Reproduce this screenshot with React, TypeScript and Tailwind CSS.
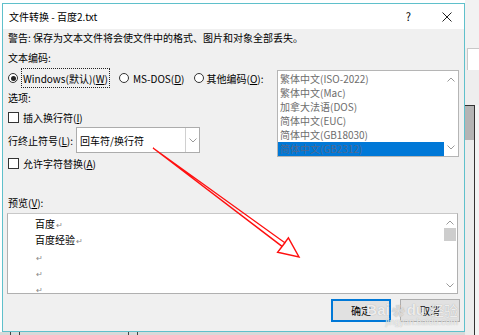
import React from 'react';

const font = "font-['Noto_Sans_CJK_SC','Noto_Sans',sans-serif]";

function U({ children }: { children: React.ReactNode }) {
  return <span className="underline underline-offset-1">{children}</span>;
}

function Radio({ checked }: { checked?: boolean }) {
  return (
    <span className="w-[10px] h-[10px] rounded-full border border-[#333] bg-white flex items-center justify-center shrink-0">
      {checked && <span className="w-[5px] h-[5px] rounded-full bg-[#222]" />}
    </span>
  );
}

function Check() {
  return <span className="w-[11px] h-[11px] border border-[#333] bg-white shrink-0" />;
}

function Chevron({ up }: { up?: boolean }) {
  return (
    <svg width="8" height="5" viewBox="0 0 8 5" className="text-[#9a9a9a]">
      <path d={up ? 'M0.5 4.5 L4 1 L7.5 4.5' : 'M0.5 0.5 L4 4 L7.5 0.5'} fill="none" stroke="currentColor" strokeWidth="1" />
    </svg>
  );
}

const encodings = ['繁体中文(ISO-2022)', '繁体中文(Mac)', '加拿大法语(DOS)', '简体中文(EUC)', '简体中文(GB18030)', '简体中文(GB2312)'];

const preview = ['百度', '百度经验', '', '', ''];

export default function App() {
  return (
    <div className={`w-[479px] h-[335px] overflow-hidden flex bg-white text-[10px] text-black ${font}`}>
      <div className="w-[465px] flex flex-col shrink-0">
        <div className="h-[3px] bg-white" />
        <div className="ml-[2px] w-[463px] h-[329px] border border-[#5fc0cb] flex flex-col relative">
          <div className="h-[25px] bg-white flex items-center pl-[6px] pr-[12px]">
            <span>文件转换 - 百度2.txt</span>
            <span className="ml-auto mr-[31px] text-[11px]">?</span>
            <svg width="10" height="10" viewBox="0 0 10 10">
              <path d="M0.5 0.5 L9.5 9.5 M9.5 0.5 L0.5 9.5" stroke="#222" strokeWidth="1" />
            </svg>
          </div>

          <div className="flex-1 bg-[#f0f0f0] pl-[5px] pr-[4px] pt-[1px] flex flex-col">
            <div className="h-[16px] leading-[16px]">警告: 保存为文本文件将会使文件中的格式、图片和对象全部丢失。</div>

            <div className="flex">
              <div className="w-[269px] flex flex-col">
                <div className="h-[16px] leading-[16px] mt-[4px]">文本编码:</div>
                <div className="h-[20px] mt-[2px] flex items-center">
                  <Radio checked />
                  <span className="ml-[3px] h-[20px] px-[1px] border border-dotted border-[#222] flex items-center">
                    Windows(默认)(<U>W</U>)
                  </span>
                  <span className="ml-[9px]">
                    <Radio />
                  </span>
                  <span className="ml-[4px]">
                    MS-DOS(<U>D</U>)
                  </span>
                  <span className="ml-[9px]">
                    <Radio />
                  </span>
                  <span className="ml-[3px]">
                    其他编码(<U>O</U>):
                  </span>
                </div>
                <div className="h-[16px] leading-[16px] mt-[2px]">选项:</div>
                <div className="h-[16px] mt-[3px] flex items-center gap-[4px]">
                  <Check />
                  <span>
                    插入换行符(<U>I</U>)
                  </span>
                </div>
                <div className="h-[26px] mt-[2px] flex items-center">
                  <span>
                    行终止符号(<U>L</U>):
                  </span>
                  <div className="ml-[3px] w-[124px] h-[26px] bg-white border border-[#acacac] flex items-center">
                    <span className="pl-[3px] flex-1">回车符/换行符</span>
                    <div className="w-[14px] h-full border-l border-[#d0d0d0] flex items-center justify-center">
                      <Chevron />
                    </div>
                  </div>
                </div>
                <div className="h-[16px] mt-[2px] flex items-center gap-[4px]">
                  <Check />
                  <span>
                    允许字符替换(<U>A</U>)
                  </span>
                </div>
              </div>

              <div className="mt-[24px] w-[182px] h-[87px] border border-[#b5b5b5] bg-white flex">
                <div className="flex-1 pt-[1px] flex flex-col">
                  {encodings.map((e, i) => (
                    <div
                      key={e}
                      className={`h-[14px] leading-[14px] pl-[2px] ${
                        i === encodings.length - 1 ? 'bg-[#0078d7] text-[#4d6a93]' : 'text-[#6d6d6d]'
                      }`}
                    >
                      {e}
                    </div>
                  ))}
                </div>
                <div className="w-[14px] flex flex-col items-center justify-between py-[6px]">
                  <Chevron up />
                  <Chevron />
                </div>
              </div>
            </div>

            <div className="h-[16px] leading-[16px] mt-[24px]">
              预览(<U>V</U>):
            </div>
            <div className="mt-[2px] -ml-px w-[451px] h-[81px] bg-white border border-[#b0b0b0] border-t-[#c8c8c8] flex overflow-hidden">
              <div className="flex-1 pl-[27px] pt-[2px] flex flex-col">
                {preview.map((line, i) => (
                  <div key={i} className="h-[16.3px] leading-[16px] shrink-0 flex items-center">
                    <span>{line}</span>
                    <span className="text-[8px] text-[#888] ml-[1px] mt-[2px]">↵</span>
                  </div>
                ))}
              </div>
              <div className="w-[14px] flex flex-col items-center pt-[6px] pb-[5px]">
                <Chevron up />
                <div className="mt-[3px] w-[12px] h-[13px] bg-[#cdcdcd]" />
                <div className="mt-auto">
                  <Chevron />
                </div>
              </div>
            </div>

            <div className="mt-[5px] flex justify-end gap-[9px]">
              <button className="w-[60px] h-[23px] bg-[#e1e1e1] border-2 border-[#0078d7] flex items-center justify-center">
                确定
              </button>
              <button className="w-[60px] h-[23px] bg-[#e1e1e1] border border-[#adadad] flex items-center justify-center">
                取消
              </button>
            </div>
          </div>

          <div className="absolute right-[6px] bottom-[3px] flex flex-col items-end text-white/80 [text-shadow:0_0_1px_#999] pointer-events-none">
            <div className="flex items-end gap-[2px] leading-none">
              <span className="text-[15px] font-bold font-['Liberation_Sans',sans-serif]">Bai</span>
              <span className="text-[13px] text-white/60">✿</span>
              <span className="text-[15px] font-bold font-['Liberation_Sans',sans-serif]">du</span>
              <span className="text-[14px] ml-[3px]">经验</span>
            </div>
            <div className="text-[9px] leading-[11px] font-['Liberation_Sans',sans-serif]">jingyan.baidu.com</div>
          </div>

          <svg className="absolute left-[-3px] top-[-4px] pointer-events-none" width="465" height="335" viewBox="0 0 465 335">
            <polygon
              points="153,148 284.9,242.8 277.6,252.2 299,257 288.4,237.8 282.1,246.4"
              fill="none"
              stroke="#ff1010"
              strokeWidth="1.4"
              strokeLinejoin="miter"
            />
          </svg>
        </div>
        <div className="flex-1 bg-[#d9d9d9] flex">
          <span className="ml-[10px] w-px bg-[#444]" />
          <span className="ml-[8px] w-px bg-[#444]" />
          <span className="ml-[108px] w-px bg-[#444]" />
          <span className="ml-[8px] w-px bg-[#444]" />
        </div>
      </div>

      <div className="flex-1 flex flex-col bg-[#eeeeee]">
        <div className="h-[48px] bg-[#f2f2f2]" />
        <div className="h-[22px] ml-[2px] border-l border-t border-[#c8c8c8] bg-white" />
        <div className="h-[35px]" />
        <div className="flex flex-1">
          <div className="w-[10px] border-t border-r border-[#333] flex flex-col">
            <div className="h-[34px] bg-[#b4b4b4]" />
            <div className="flex-1 bg-[#ececec]" />
          </div>
          <div className="flex-1 bg-[#f4f4f4]" />
        </div>
      </div>
    </div>
  );
}
